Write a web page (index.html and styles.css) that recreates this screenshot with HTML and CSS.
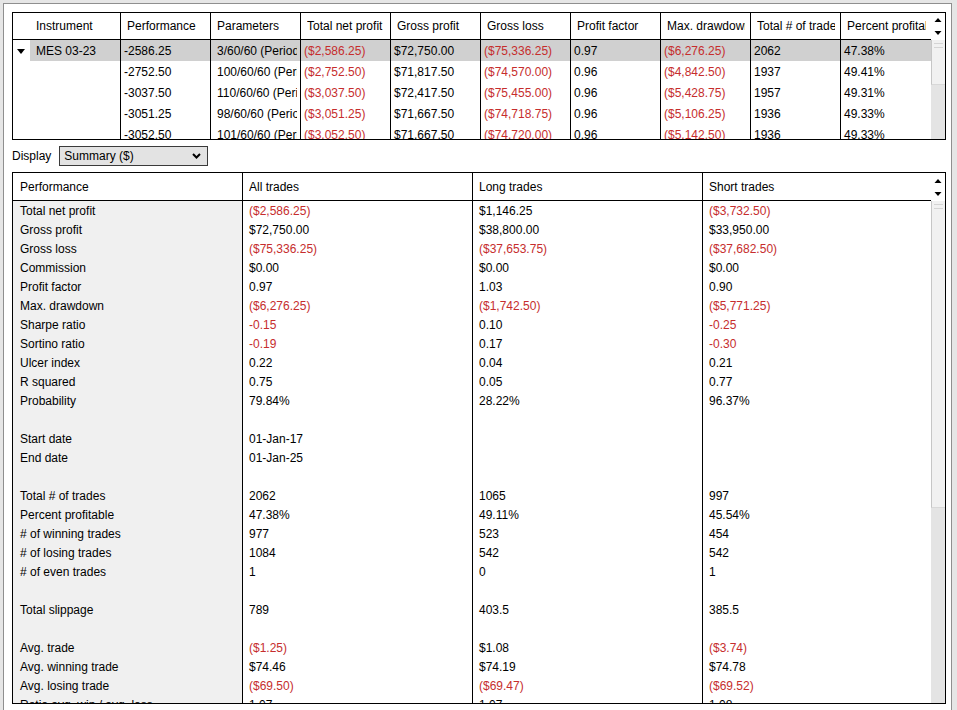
FILE: index.html
```html
<!DOCTYPE html>
<html lang="en">

<head>
  <meta charset="UTF-8">
  <title>Strategy Analyzer</title>
  <link rel="stylesheet" href="styles.css">
</head>

<body>
  <div class="panel">
    <!-- optimization results -->
    <div class="grid results">
      <div class="grid-main">
        <table>
          <colgroup>
            <col style="width:107px">
            <col style="width:90px"><col style="width:90px"><col style="width:90px"><col style="width:90px">
            <col style="width:90px"><col style="width:90px"><col style="width:90px"><col style="width:90px">
            <col style="width:91px">
          </colgroup>
          <thead>
            <tr>
              <th class="inst"><span>Instrument</span></th>
              <th><span>Performance</span></th>
              <th><span>Parameters</span></th>
              <th><span>Total net profit</span></th>
              <th><span>Gross profit</span></th>
              <th><span>Gross loss</span></th>
              <th><span>Profit factor</span></th>
              <th><span>Max. drawdown</span></th>
              <th><span>Total # of trades</span></th>
              <th><span>Percent profitable</span></th>
            </tr>
          </thead>
          <tbody>
            <tr class="sel">
              <td class="inst"><svg class="caret" width="8" height="5" viewBox="0 0 8 5"><path d="M0 0H8L4 5Z" fill="#000"/></svg>MES 03-23</td>
              <td>-2586.25</td><td class="params"><span>3/60/60 (Periods)</span></td><td class="neg">($2,586.25)</td><td>$72,750.00</td>
              <td class="neg">($75,336.25)</td><td>0.97</td><td class="neg">($6,276.25)</td><td>2062</td><td>47.38%</td>
            </tr>
            <tr>
              <td></td><td>-2752.50</td><td class="params"><span>100/60/60 (Periods)</span></td><td class="neg">($2,752.50)</td><td>$71,817.50</td>
              <td class="neg">($74,570.00)</td><td>0.96</td><td class="neg">($4,842.50)</td><td>1937</td><td>49.41%</td>
            </tr>
            <tr>
              <td></td><td>-3037.50</td><td class="params"><span>110/60/60 (Periods)</span></td><td class="neg">($3,037.50)</td><td>$72,417.50</td>
              <td class="neg">($75,455.00)</td><td>0.96</td><td class="neg">($5,428.75)</td><td>1957</td><td>49.31%</td>
            </tr>
            <tr>
              <td></td><td>-3051.25</td><td class="params"><span>98/60/60 (Periods)</span></td><td class="neg">($3,051.25)</td><td>$71,667.50</td>
              <td class="neg">($74,718.75)</td><td>0.96</td><td class="neg">($5,106.25)</td><td>1936</td><td>49.33%</td>
            </tr>
            <tr>
              <td></td><td>-3052.50</td><td class="params"><span>101/60/60 (Periods)</span></td><td class="neg">($3,052.50)</td><td>$71,667.50</td>
              <td class="neg">($74,720.00)</td><td>0.96</td><td class="neg">($5,142.50)</td><td>1936</td><td>49.33%</td>
            </tr>
          </tbody>
        </table>
      </div>
      <div class="vscroll">
        <div class="vscroll-head">
          <svg width="14" height="26" viewBox="0 0 14 26"><path d="M3.5 9L7 5L10.5 9Z M3.5 18H10.5L7 22Z" fill="#000"/></svg>
        </div>
        <div class="track"><div class="thumb"></div></div>
      </div>
    </div>

    <div class="display">
      <label for="display_mode">Display</label>
      <div class="select">
        <select id="display_mode">
          <option>Summary ($)</option>
          <option>Summary (points)</option>
          <option>Summary (ticks)</option>
          <option>Summary (percent)</option>
        </select>
        <svg class="chev" width="9" height="6" viewBox="0 0 9 6"><path d="M1 1L4.5 4.5L8 1" fill="none" stroke="#000" stroke-width="2"/></svg>
      </div>
    </div>

    <!-- summary -->
    <div class="grid summary">
      <div class="grid-main">
        <table>
          <colgroup>
            <col style="width:229px"><col style="width:230px"><col style="width:230px"><col style="width:229px">
          </colgroup>
          <thead>
            <tr><th><span>Performance</span></th><th><span>All trades</span></th><th><span>Long trades</span></th><th><span>Short trades</span></th></tr>
          </thead>
          <tbody>
            <tr><td>Total net profit</td><td class="neg">($2,586.25)</td><td>$1,146.25</td><td class="neg">($3,732.50)</td></tr>
            <tr><td>Gross profit</td><td>$72,750.00</td><td>$38,800.00</td><td>$33,950.00</td></tr>
            <tr><td>Gross loss</td><td class="neg">($75,336.25)</td><td class="neg">($37,653.75)</td><td class="neg">($37,682.50)</td></tr>
            <tr><td>Commission</td><td>$0.00</td><td>$0.00</td><td>$0.00</td></tr>
            <tr><td>Profit factor</td><td>0.97</td><td>1.03</td><td>0.90</td></tr>
            <tr><td>Max. drawdown</td><td class="neg">($6,276.25)</td><td class="neg">($1,742.50)</td><td class="neg">($5,771.25)</td></tr>
            <tr><td>Sharpe ratio</td><td class="neg">-0.15</td><td>0.10</td><td class="neg">-0.25</td></tr>
            <tr><td>Sortino ratio</td><td class="neg">-0.19</td><td>0.17</td><td class="neg">-0.30</td></tr>
            <tr><td>Ulcer index</td><td>0.22</td><td>0.04</td><td>0.21</td></tr>
            <tr><td>R squared</td><td>0.75</td><td>0.05</td><td>0.77</td></tr>
            <tr><td>Probability</td><td>79.84%</td><td>28.22%</td><td>96.37%</td></tr>
            <tr><td>&nbsp;</td><td></td><td></td><td></td></tr>
            <tr><td>Start date</td><td>01-Jan-17</td><td></td><td></td></tr>
            <tr><td>End date</td><td>01-Jan-25</td><td></td><td></td></tr>
            <tr><td>&nbsp;</td><td></td><td></td><td></td></tr>
            <tr><td>Total # of trades</td><td>2062</td><td>1065</td><td>997</td></tr>
            <tr><td>Percent profitable</td><td>47.38%</td><td>49.11%</td><td>45.54%</td></tr>
            <tr><td># of winning trades</td><td>977</td><td>523</td><td>454</td></tr>
            <tr><td># of losing trades</td><td>1084</td><td>542</td><td>542</td></tr>
            <tr><td># of even trades</td><td>1</td><td>0</td><td>1</td></tr>
            <tr><td>&nbsp;</td><td></td><td></td><td></td></tr>
            <tr><td>Total slippage</td><td>789</td><td>403.5</td><td>385.5</td></tr>
            <tr><td>&nbsp;</td><td></td><td></td><td></td></tr>
            <tr><td>Avg. trade</td><td class="neg">($1.25)</td><td>$1.08</td><td class="neg">($3.74)</td></tr>
            <tr><td>Avg. winning trade</td><td>$74.46</td><td>$74.19</td><td>$74.78</td></tr>
            <tr><td>Avg. losing trade</td><td class="neg">($69.50)</td><td class="neg">($69.47)</td><td class="neg">($69.52)</td></tr>
            <tr><td>Ratio avg. win / avg. loss</td><td>1.07</td><td>1.07</td><td>1.08</td></tr>
          </tbody>
        </table>
      </div>
      <div class="vscroll">
        <div class="vscroll-head">
          <svg width="14" height="27" viewBox="0 0 14 27"><path d="M3.5 10L7 6L10.5 10Z M3.5 19H10.5L7 23Z" fill="#000"/></svg>
        </div>
        <div class="track"><div class="thumb"></div></div>
      </div>
    </div>
  </div>
</body>

</html>
```

FILE: styles.css
```css
html,
body {
  margin: 0;
  padding: 0;
  height: 710px;
  overflow: hidden;
  background-color: #e6e6e6;
  font-family: "Liberation Sans", Arial, sans-serif;
  font-size: 12px;
  color: #000;
}

.panel {
  box-sizing: border-box;
  width: 949px;
  margin: 3px 0 0 3px;
  padding: 8px 5px 8px 8px;
  border: 1px solid #8f8f8f;
  background-color: #fff;
}

.grid {
  box-sizing: border-box;
  display: flex;
  border: 1px solid #000;
  background-color: #fff;
}

.grid.results {
  height: 128px;
}

.grid.summary {
  height: 532px;
}

.grid-main {
  flex: 1;
  overflow: hidden;
}

table {
  table-layout: fixed;
  border-collapse: separate;
  border-spacing: 0;
  width: 918px;
}

th,
td {
  overflow: hidden;
  white-space: nowrap;
  text-overflow: clip;
  text-align: left;
  font-weight: normal;
  padding: 0;
}

th + th,
td + td {
  border-left: 1px solid #000;
}

th {
  border-bottom: 1px solid #000;
}

/* header labels clip a few pixels before the next column */
th span {
  display: block;
  overflow: hidden;
  margin-right: 5px;
}

.neg {
  color: #c62d2d;
}

/* results grid */
.results th {
  line-height: 25px;
  padding: 1px 0 0 6px;
}

.results td {
  line-height: 19px;
  padding: 2px 0 0 3px;
}

.results .inst {
  padding-left: 23px;
}

.results td.params {
  padding-left: 6px;
}

.results td.params span {
  display: block;
  overflow: hidden;
  margin-right: 3px;
}

.results tr.sel td {
  background-color: #d0d0d0;
}

.results tr.sel td.inst {
  padding-left: 4px;
  background: linear-gradient(to right, #fff 17px, #d0d0d0 17px);
}

.caret {
  margin-right: 11px;
  vertical-align: 1px;
}

/* summary grid */
.summary th {
  line-height: 25px;
  padding: 2px 0 0 6px;
}

.summary td {
  line-height: 17px;
  padding: 2px 6px 0;
}

.summary th:first-child,
.summary td:first-child {
  padding-left: 7px;
}

.summary td:first-child {
  background-color: #f0f0f0;
}

/* scrollbars */
.vscroll {
  width: 14px;
  display: flex;
  flex-direction: column;
}

.vscroll-head svg {
  display: block;
}

.results .vscroll-head {
  height: 27px;
}

.summary .vscroll-head {
  height: 28px;
}

.track {
  flex: 1;
  background-color: #e4e4e4;
}

.thumb {
  box-sizing: border-box;
  background-color: #f1f1f1;
  border-left: 1px solid #c6c6c6;
  border-bottom: 1px solid #d8d8d8;
  position: relative;
}

.thumb::before {
  content: "";
  position: absolute;
  left: 2px;
  right: 2px;
  top: 3px;
  height: 3px;
  border-top: 1px solid #d4d4d4;
  border-bottom: 1px solid #d4d4d4;
}

.results .thumb {
  height: 45px;
}

.summary .thumb {
  height: 307px;
}

/* display selector */
.display {
  display: flex;
  align-items: center;
  gap: 8px;
  height: 32px;
}

.select {
  position: relative;
}

.select select {
  appearance: none;
  box-sizing: border-box;
  width: 149px;
  height: 20px;
  margin: 0;
  padding: 0 4px;
  border: 1px solid #3a3a3a;
  border-radius: 0;
  background-color: #e3e3e3;
  font-family: "Liberation Sans", Arial, sans-serif;
  font-size: 12px;
  color: #000;
}

.chev {
  position: absolute;
  right: 7px;
  top: 7px;
  pointer-events: none;
}
```
